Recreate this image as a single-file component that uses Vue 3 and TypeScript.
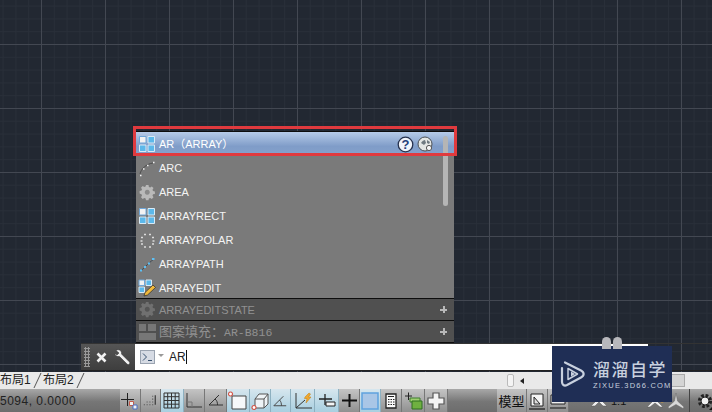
<script setup lang="ts">
type Shape = { d: string; s?: string; f?: string; w?: number }
type Btn = { w: number; on?: boolean; label?: string; shapes: Shape[] }

const blue4: Shape[] = [
  { d: 'M1.500 1.500h6.500v6.500H1.500z', f: '#f2f2f2', s: '#6fa6d8' },
  { d: 'M10 1.500h6.500v6.500H10z', f: '#5cb8ea', s: '#d8eaf6' },
  { d: 'M1.500 10h6.500v6.500H1.500z', f: '#5cb8ea', s: '#d8eaf6' },
  { d: 'M10 10h6.500v6.500H10z', f: '#5cb8ea', s: '#d8eaf6' },
]
const gear: Shape[] = [
  { d: 'M8 2h2.500l.4 1.900 1.300.5 1.600-1 1.700 1.700-1 1.600.5 1.300 1.900.4v2.500l-1.900.4-.5 1.300 1 1.600-1.700 1.700-1.600-1-1.300.5-.4 1.900H8l-.4-1.900-1.300-.5-1.600 1-1.700-1.700 1-1.600-.5-1.300L1.600 10.500V8l1.900-.4.5-1.300-1-1.600 1.700-1.700 1.600 1 1.300-.5z', f: '#b9b9b9' },
  { d: 'M9.250 6.800a2.500 2.500 0 1 0 .01 0z', f: '#8a8a8a' },
]

const rows: { name: string; icon: Shape[] }[] = [
  {
    name: 'ARC',
    icon: [
      { d: 'M2 15C3 10 8 5 15 4', s: '#4d4d4d', w: 1 },
      { d: 'M2 16.500h1.500M5 10h1.500M9 6.500h1.500M15 3.500h1.500', s: '#f4f4f4', w: 1.500 },
    ],
  },
  { name: 'AREA', icon: gear },
  { name: 'ARRAYRECT', icon: blue4 },
  {
    name: 'ARRAYPOLAR',
    icon: [{ d: 'M6 3.500h2M11 3.500h2M3 6.500h2M14 6.500h2M2.500 10h2M14.500 10h2M3 13h2M14 13h2M6 16h2M11 16h2', s: '#dcdcdc', w: 1.600 }],
  },
  {
    name: 'ARRAYPATH',
    icon: [
      { d: 'M2 16C6 14 9 9 16 4', s: '#3d4a55', w: 1 },
      { d: 'M2 15.500h2M6 12h2M10 8.500h2M14 4h2.500', s: '#5cc0f5', w: 2 },
    ],
  },
  {
    name: 'ARRAYEDIT',
    icon: [
      { d: 'M1 1h5.500v5.500H1z', f: '#f2f2f2', s: '#6fa6d8' },
      { d: 'M8 1h5.500v5.500H8z', f: '#5cb8ea', s: '#d8eaf6' },
      { d: 'M1 8h5.500v5.500H1z', f: '#5cb8ea', s: '#d8eaf6' },
      { d: 'M6 17l1-3.500L15 6l2.500 2.500L9.500 16z', f: '#f0b83a', s: '#2a2a2a', w: 0.700 },
    ],
  },
]

const leftBtns: Btn[] = [
  { w: 21, shapes: [{ d: 'M1 8.500h13M7.500 2v13', s: '#222' }, { d: 'M9.500 10.500h4v4h-4z', f: '#f2f2f2', s: '#c45a4a' }, { d: 'M13 14h4v4h-4z', f: '#f2f2f2', s: '#4a6fc4' }] },
  { w: 20, shapes: [{ d: 'M3 14h.8M6 14h.8M9 14h.8M12 14h.8M6 11h.8M9 11h.8M12 11h.8M12 8h.8M12 5h.8M15 4v10', s: '#333', w: 1.200 }] },
  { w: 23, on: true, shapes: [{ d: 'M2 2h15v15H2zM5.700 2v15M9.500 2v15M13.200 2v15M2 5.700h15M2 9.500h15M2 13.200h15', s: '#333' }] },
  { w: 21, shapes: [{ d: 'M3 2v14h15', s: '#333' }, { d: 'M3 11h5v5', s: '#777' }] },
  { w: 22, shapes: [{ d: 'M3 14L13 4M3 14h14M9 8c2 1.500 2.500 3.500 2.500 6', s: '#333' }] },
  { w: 23, on: true, shapes: [{ d: 'M4 5h14v13H4z', f: '#f5f8fa', s: '#444' }, { d: 'M2.500 1a2 2 0 1 0 .01 0z', f: '#fff', s: '#d2574a', w: 1.200 }] },
  { w: 21, on: true, shapes: [{ d: 'M5 8l4-5h9v10l-4 4H5zM5 8h9v9M14 8l4-5', f: '#eef3f6', s: '#555' }, { d: 'M4 14.500a2 2 0 1 0 .01 0z', f: '#fff', s: '#d2574a', w: 1.200 }] },
  { w: 20, on: true, shapes: [{ d: 'M3 15L13 5M3 15h13M9 9c1.500 1.500 2 3.500 2 6', s: '#444' }] },
  { w: 24, on: true, shapes: [{ d: 'M3 2v15h16M3 17L12 9', s: '#333' }, { d: 'M12 6l4-4 1.500 1-2 3h2.500l-5 6 1-4.500h-2.500z', f: '#f0a92e', s: '#c07a10', w: 0.500 }] },
  { w: 24, on: true, shapes: [{ d: 'M2 8h13M8 3v11', s: '#222', w: 1.300 }, { d: 'M9 11h9v4H9z', f: '#f3f5f6', s: '#222' }] },
  { w: 21, shapes: [{ d: 'M3 9.500h15', s: '#111', w: 2 }, { d: 'M10.500 3v13', s: '#111', w: 2 }] },
  { w: 21, on: true, shapes: [{ d: 'M2 2h16v16H2z', f: '#a9c6e6', s: '#5fa2de', w: 1.500 }] },
  { w: 21, shapes: [{ d: 'M5 3h10v14H5z', f: '#fafafa', s: '#222', w: 1.300 }, { d: 'M7 5.500h6M7 8.500h1.500M9.500 8.500H11M12 8.500h1.500M7 11h1.500M9.500 11H11M12 11h1.500M7 13.500h1.500M9.500 13.500H11M12 13.500h1.500', s: '#222' }] },
  { w: 23, shapes: [{ d: 'M2 5h7M5.500 1.500V9', s: '#222' }, { d: 'M7 7h10v4H7z', f: '#9fcf70', s: '#3f7f2f' }, { d: 'M9 10h10v8H9z', f: '#6fb040', s: '#2f6f20' }] },
  { w: 23, shapes: [{ d: 'M7 2h6v5h5v6h-5v5H7v-5H2V7h5z', f: '#f4f4f4', s: '#555', w: 1.200 }] },
]

const rightBtns: Btn[] = [
  { w: 30, label: '模型', shapes: [] },
  { w: 21, shapes: [{ d: 'M4 3h12v12H4z', f: '#f5f5f5', s: '#222' }, { d: 'M7 13V6l6 7z', f: '#ddd', s: '#222' }, { d: 'M2 18h16', s: '#333', w: 1.500 }] },
  { w: 21, shapes: [{ d: 'M3 4h14v9H3z', f: '#eee', s: '#222' }, { d: 'M2 17h16', s: '#555', w: 2 }] },
]
</script>

<template>
  <div class="screen">
    <div class="canvas">
      <div class="floating">
        <div class="palette">
          <div class="list">
            <div class="row row--selected">
              <svg class="ico" width="19" height="19" viewBox="0 0 19 19">
                <path v-for="(p, i) in blue4" :key="i" :d="p.d" :fill="p.f || 'none'" :stroke="p.s || 'none'" />
              </svg>
              <span class="row__text">AR（ARRAY）</span>
              <span class="row__tools">
                <svg width="17" height="17" viewBox="0 0 17 17">
                  <circle cx="8.500" cy="8.500" r="7.300" fill="#f1f4fa" stroke="#26324f" stroke-width="1.300" />
                  <text x="8.500" y="12.600" text-anchor="middle" class="help">?</text>
                </svg>
                <svg width="17" height="17" viewBox="0 0 17 17">
                  <circle cx="8" cy="8" r="7" fill="#e3e6e4" stroke="#4a4f55" />
                  <path d="M4 7c1-2 3-3 4-3l1 3-2 2zM10 4l3 2-1 2-2-1z" fill="#6f7a80" />
                  <circle cx="12" cy="12" r="2.600" fill="#f6f6f6" stroke="#555" />
                </svg>
              </span>
            </div>
            <div v-for="r in rows" :key="r.name" class="row">
              <svg class="ico" width="19" height="19" viewBox="0 0 19 19">
                <path v-for="(p, i) in r.icon" :key="i" :d="p.d" :fill="p.f || 'none'" :stroke="p.s || 'none'" :stroke-width="p.w || 1" />
              </svg>
              <span class="row__text">{{ r.name }}</span>
            </div>
            <div class="scroll"></div>
          </div>
          <div class="section">
            <svg class="ico" width="19" height="19" viewBox="0 0 19 19">
              <path :d="gear[0].d" fill="#707070" />
              <path :d="gear[1].d" fill="#555" />
            </svg>
            <span class="section__text">ARRAYEDITSTATE</span>
            <span class="plus"></span>
          </div>
          <div class="section">
            <svg class="ico" width="19" height="19" viewBox="0 0 19 19">
              <path d="M1 2h7v7H1zM10 2h8v7h-8zM1 11h17v7H1z" fill="#777" />
            </svg>
            <span class="section__text section__text--cjk"><b>图案填充：</b>AR-B816</span>
            <span class="plus"></span>
          </div>
        </div>

        <div class="cmd">
          <div class="cmd__side">
            <span class="grip"></span>
            <svg width="13" height="13" viewBox="0 0 13 13"><path d="M2.500 2.500l8 8M10.500 2.500l-8 8" stroke="#f2f2f2" stroke-width="2.600" /></svg>
            <svg width="19" height="19" viewBox="0 0 19 19">
              <path d="M3 2.500c2-1.500 5-.5 5.500 2 .1.600.1 1 0 1.500l7.500 7.500c1 1 1 1.800.3 2.500s-1.600.8-2.500-.2L6.500 8.500C4 9 2 7.500 1.800 5.500L4 7l2-2z" fill="#f0f0f0" stroke="#333" stroke-width=".5" />
            </svg>
          </div>
          <div class="cmd__input">
            <svg width="15" height="14" viewBox="0 0 15 14">
              <rect x=".5" y=".5" width="14" height="13" fill="#d6dbe4" stroke="#9aa3b0" />
              <path d="M3 3.500L6.500 7 3 10.500M8 10.500h4" fill="none" stroke="#36506e" />
            </svg>
            <span class="caret-down"></span>
            <span class="cmd__text">AR</span>
            <span class="cursor"></span>
          </div>
        </div>
      </div>

      <span class="red-box"></span>
    </div>

    <div class="tabs">
      <div class="tabs__names">
        <span class="tab">布局1</span>
        <span class="tab">布局2</span>
      </div>
      <div class="hscroll">
        <span class="hscroll__end"></span>
        <span class="hscroll__arrow"></span>
        <span class="hscroll__thumb"></span>
      </div>
    </div>

    <div class="status">
      <span class="coords">5094, 0.0000</span>
      <div class="btns">
        <span v-for="(b, n) in leftBtns" :key="n" class="btn" :class="{ 'btn--on': b.on }" :style="{ width: b.w + 'px' }">
          <svg width="20" height="20" viewBox="0 0 20 20">
            <path v-for="(p, i) in b.shapes" :key="i" :d="p.d" :fill="p.f || 'none'" :stroke="p.s || 'none'" :stroke-width="p.w || 1" />
          </svg>
        </span>
      </div>
      <div class="btns btns--right">
        <span v-for="(b, n) in rightBtns" :key="n" class="btn" :style="{ width: b.w + 'px' }">
          <span v-if="b.label" class="btn__label">{{ b.label }}</span>
          <svg v-else width="20" height="20" viewBox="0 0 20 20">
            <path v-for="(p, i) in b.shapes" :key="i" :d="p.d" :fill="p.f || 'none'" :stroke="p.s || 'none'" :stroke-width="p.w || 1" />
          </svg>
        </span>
      </div>
      <div class="btns btns--end">
        <svg width="18" height="12" viewBox="0 0 18 12"><path d="M1 11L9 3l8 8h-4L9 7l-4 4z" fill="#eee" stroke="#555" stroke-width=".5" /></svg>
        <span class="scale">1:1</span>
        <svg class="gap" width="20" height="14" viewBox="0 0 20 14"><path d="M1 13L9 5l8 8h-3L9 9l-5 4z" fill="#eee" stroke="#555" stroke-width=".5" /><circle cx="16" cy="6" r="2.500" fill="#e8a53a" /></svg>
        <svg width="20" height="20" viewBox="0 0 20 20"><path d="M10 2l1.500 8 6.500 6-1 1.500-7-4-7 4-1-1.500 6.500-6z" fill="#d8d8d8" stroke="#666" stroke-width=".5" /></svg>
        <span class="sep"></span>
        <svg width="20" height="20" viewBox="0 0 20 20"><circle cx="10" cy="10" r="5.500" fill="none" stroke="#222" stroke-width="3.200" stroke-dasharray="2.600 1.700" /><circle cx="10" cy="10" r="4" fill="#f2f2f2" stroke="#222" /><path d="M14 19l5-5v5z" fill="#111" /></svg>
      </div>
    </div>

    <div class="logo">
      <span class="ears"><i></i><i></i></span>
      <svg width="26" height="30" viewBox="0 0 26 30">
        <path d="M5 3.500l16 8c3.500 1.800 3.500 5.200 0 7L7 26c-3 1.500-5-.5-5-3V9" fill="none" stroke="#c8d0de" stroke-width="2.200" stroke-linejoin="round" stroke-linecap="round" />
        <path d="M8 9.500v11l9.500-5.500z" fill="none" stroke="#c8d0de" stroke-width="1.500" stroke-linejoin="round" />
        <path d="M11 12.500v5l4-2.500z" fill="#c8d0de" />
      </svg>
      <div class="logo__text">
        <span class="logo__cn">溜溜自学</span>
        <span class="logo__en">ZIXUE.3D66.COM</span>
      </div>
    </div>
  </div>
</template>

<style>
html, body { margin: 0; background: #222832; overflow: hidden; }
</style>

<style scoped>
.screen {
  width: 712px; height: 412px; display: flex; flex-direction: column;
  position: relative; overflow: hidden;
  font-family: "Liberation Sans", "Noto Sans CJK SC", sans-serif;
}
/* drawing area */
.canvas {
  flex: 1; position: relative; background-color: #222832;
  background-image:
    linear-gradient(90deg, #434852 1px, transparent 1px),
    linear-gradient(#434852 1px, transparent 1px),
    linear-gradient(90deg, #292f39 1px, transparent 1px),
    linear-gradient(#292f39 1px, transparent 1px);
  background-size: 64px 64px, 64px 64px, 12.800px 12.800px, 12.800px 12.800px;
  background-position: 41px 0, 0 44px, 41px 0, 0 44px;
}
.floating { position: absolute; left: 81px; top: 131px; width: 631px; }

/* autocomplete list */
.palette { margin-left: 55px; width: 318px; background: #4f4f4f; }
.list {
  position: relative; height: 166px; overflow: hidden; background: #7a7a7a;
  border-top: 1px solid #0d0d0d; border-bottom: 1px solid #0d0d0d;
}
.row { height: 24px; display: flex; align-items: center; padding-left: 2px; gap: 2px; color: #f4f4f4; font-size: 11px; }
.row--selected { background: linear-gradient(#b6cbe8, #7f9cc8 60%, #86a2cc); color: #fff; }
.row__text { line-height: 24px; }
.row__tools { margin-left: auto; margin-right: 20px; display: flex; gap: 3px; }
.help { font: 700 13px "Liberation Sans", sans-serif; fill: #26407a; }
.ico { flex: none; }
.scroll {
  position: absolute; right: 6px; top: 4px; width: 5px; height: 70px;
  background: #b5b5b5; border-radius: 3px;
}
.section {
  height: 21px; display: flex; align-items: center; gap: 2px; padding: 0 2px;
  background: #505050; border-bottom: 1px solid #0d0d0d; color: #909090; font-size: 11px;
}
.section__text { white-space: nowrap; }
.section__text--cjk {
  font-family: "Liberation Mono", "Noto Sans CJK SC", monospace; font-size: 11.500px;
  line-height: 14px; margin-bottom: 2px;
}
.section__text--cjk b { font: 400 13px "Noto Sans CJK SC", sans-serif; }
.plus {
  margin-left: auto; margin-right: 5px; width: 7px; height: 7px;
  background:
    linear-gradient(#b8b8b8, #b8b8b8) center / 7px 2px no-repeat,
    linear-gradient(#b8b8b8, #b8b8b8) center / 2px 7px no-repeat;
}
.red-box {
  position: absolute; left: 133px; top: 126px; width: 324px; height: 30px;
  box-sizing: border-box; border: 3px solid #e03a3e;
}

/* command line */
.cmd { height: 28px; display: flex; box-sizing: border-box; border-top: 1px solid #333; border-bottom: 1px solid #222; }
.cmd__side {
  width: 54px; box-sizing: border-box; display: flex; align-items: center; gap: 5px; padding-left: 3px;
  background: linear-gradient(#555, #3e3e3e);
}
.grip {
  width: 6px; height: 20px; flex: none;
  background: radial-gradient(circle, #999 1px, transparent 1.200px) 0 0 / 3px 3px;
}
.cmd__input {
  width: 513px; box-sizing: border-box; background: #fff; display: flex; align-items: center;
  padding-left: 5px; font-size: 12px; color: #222;
}
.caret-down {
  width: 0; height: 0; margin: 0 5px 3px 3px;
  border: 3px solid transparent; border-top: 3px solid #999; border-bottom: 0;
}
.cmd__text { line-height: 14px; }
.cursor { width: 1px; height: 14px; background: #111; }

/* layout tabs */
.tabs {
  height: 17px; background: #e9e9e9; display: flex; justify-content: space-between;
  box-sizing: border-box;
}
.tabs__names { display: flex; font-size: 12px; color: #222; line-height: 17px; }
.tab { position: relative; width: 29px; white-space: nowrap; margin-right: 14px; }
.tab::after {
  content: ''; position: absolute; right: -9px; top: 1px; width: 1px; height: 15px;
  background: #555; transform: skewX(-25deg);
}
.hscroll { display: flex; align-items: center; width: 205px; }
.hscroll__end { width: 7px; height: 13px; background: #f4f4f4; border: 1px solid #bbb; border-radius: 2px; box-sizing: border-box; }
.hscroll__arrow {
  margin-left: 6px; width: 0; height: 0;
  border: 3px solid transparent; border-right: 4px solid #222; border-left: 0;
}
.hscroll__thumb {
  margin-left: auto; margin-right: 27px; width: 14px; height: 13px;
  background: #d4d4d4; border: 1px solid #aaa; box-sizing: border-box;
}

/* status bar */
.status {
  height: 23px; display: flex; align-items: center;
  background: linear-gradient(#a8a8a8, #767676 55%, #6d6d6d);
  overflow: hidden;
}
.coords { width: 120px; flex: none; font-size: 12px; color: #222; white-space: nowrap; letter-spacing: .5px; }
.btns { display: flex; height: 100%; align-items: center; flex: none; }
.btn {
  height: 23px; display: flex; align-items: center; justify-content: center; flex: none;
  background: linear-gradient(#c4c4c4, #909090); border-right: 1px solid #777; box-sizing: border-box;
}
.btn--on { background: linear-gradient(#d6e6ee, #a8cfe0); border-right: 1px solid #8db0c0; }
.btn__label { font-size: 13px; color: #111; }
.btns--right { margin-left: 49px; }
.btns--end { padding-left: 21px; }
.scale { font-size: 11px; color: #111; margin-left: 3px; width: 15px; }
.gap { margin-left: 20px; }
.sep { width: 1px; height: 23px; background: #444; margin: 0 5px 0 3px; }

/* watermark */
.logo {
  position: absolute; left: 552px; top: 346px; width: 120px; height: 56px; box-sizing: border-box;
  background: #1f2e55; display: flex; align-items: center; gap: 7px; padding-left: 8px;
  color: #c8d0de;
}
.ears { position: absolute; left: 50px; top: -9px; display: flex; gap: 2px; }
.ears i { display: block; width: 9px; height: 12px; border-radius: 5px 5px 0 0; background: #b8b8bc; }
.logo__text { display: flex; flex-direction: column; gap: 2px; }
.logo__cn { font: 500 17px "Noto Sans CJK SC", sans-serif; line-height: 20px; letter-spacing: 1.500px; white-space: nowrap; }
.logo__en { font: 7.500px "Liberation Sans", sans-serif; letter-spacing: 1.200px; white-space: nowrap; }
</style>
